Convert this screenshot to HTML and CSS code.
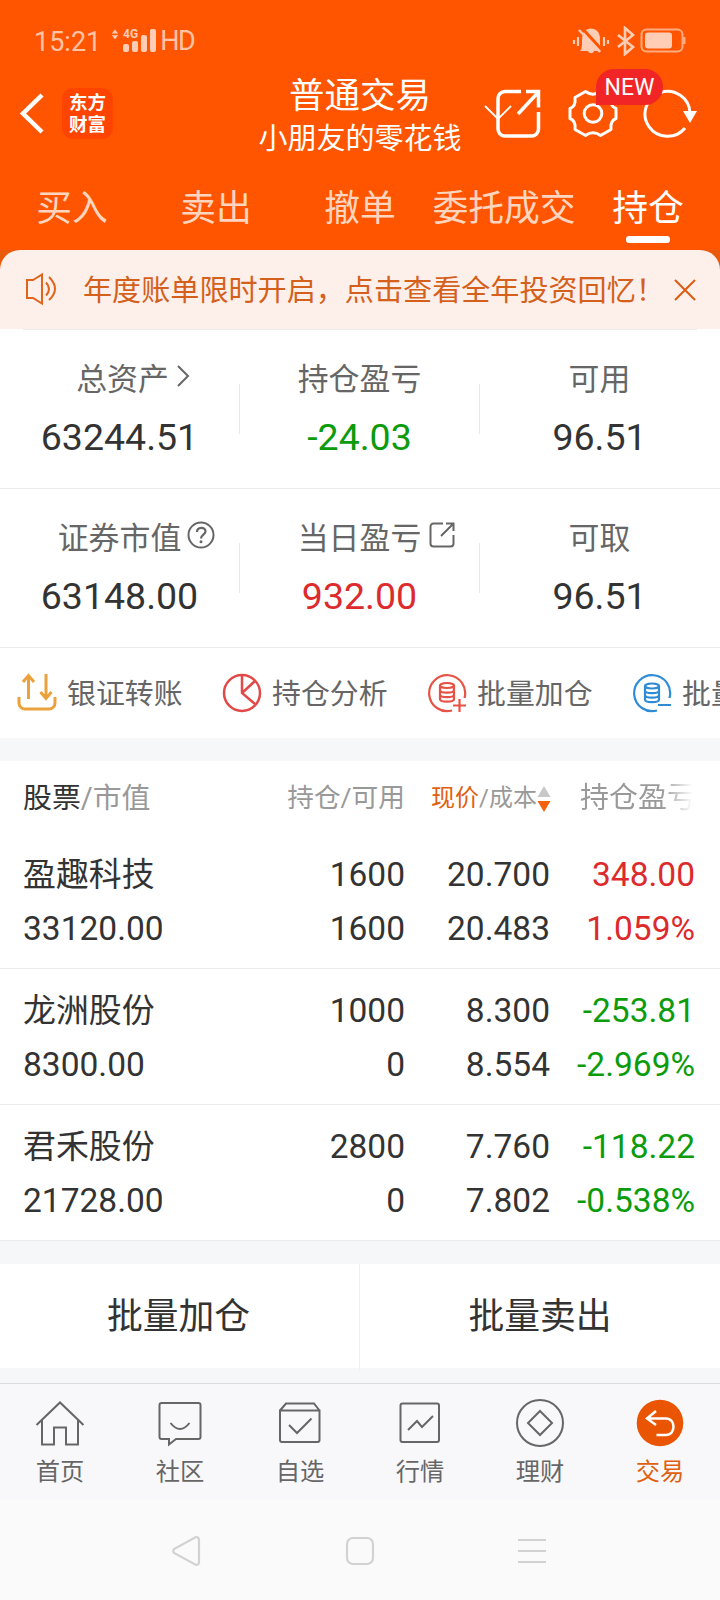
FILE: index.html
```
<!DOCTYPE html>
<html lang="zh-CN">
<head>
    <meta charset="UTF-8">
    <meta name="viewport" content="width=device-width, initial-scale=1.0">
    <title>普通交易 - 持仓</title>
    <link rel="stylesheet" href="styles.css">
</head>
<body>
    <div class="top">
        <div class="status-bar">
            <span class="time">15:21</span>
            <svg class="signal" width="46" height="26" viewBox="0 0 46 26">
                <path d="M1 7l4-5 4 5zM1 9l4 5 4-5z" transform="translate(0 1) scale(.8)"/>
                <rect x="12" y="17" width="6" height="8" rx="2"/>
                <rect x="21" y="14" width="6" height="11" rx="2"/>
                <rect x="30" y="8" width="6" height="17" rx="2"/>
                <rect x="39" y="2" width="6" height="23" rx="2"/>
                <text x="12" y="11">4G</text>
            </svg>
            <span class="hd">HD</span>
            <svg class="status-icons" width="114" height="30" viewBox="0 0 114 30">
                <path d="M8 25q2-2 2-6v-5c0-8 4-11.500 9-11.500s9 3.500 9 10.500v6q0 4 2 6h-8c-1 3-5 3-6 0z" fill="#ffcdb5"/>
                <path d="M9 1l22 24" stroke="#ff5500" stroke-width="3"/>
                <path d="M7 4l21 22" stroke="#ffcdb5" stroke-width="2.500"/>
                <path d="M2 14v4M6 11v9M32 11v9M36 14v4" stroke="#ffcdb5" stroke-width="2.200"/>
                <path d="M46 9l15 12-8 7V2l8 7-15 12" fill="none" stroke="#ffcdb5" stroke-width="2.600"/>
                <rect x="69.500" y="3.500" width="41" height="22" rx="5" fill="none" stroke="#ffab80" stroke-width="2"/>
                <rect x="73" y="6.500" width="27" height="16" rx="3" fill="#ffcdb5"/>
                <path d="M112 11v7" stroke="#ffab80" stroke-width="3"/>
            </svg>
        </div>

        <div class="header">
            <svg class="back" width="26" height="42" viewBox="0 0 26 42">
                <path d="M24 2L5 20.500 24 39" fill="none" stroke="#fff" stroke-width="4.500"/>
            </svg>
            <div class="logo">东方<br>财富</div>
            <div class="title">
                <h1>普通交易</h1>
                <p>小朋友的零花钱</p>
            </div>
            <svg class="header-icons" width="216" height="50" viewBox="0 0 216 50">
                <g fill="none" stroke="#fff" stroke-width="3.500">
                    <path d="M37 2.500H21a7 7 0 0 0-7 7V40a7 7 0 0 0 7 7h26.500a7 7 0 0 0 7-7V23M42 2.500h12.500v16M54.500 3L34 25"/>
                    <path d="M1 17l13 13 13-13" stroke-width="1.800"/>
                    <path d="M101.500 2.500Q109 8 116.500 2.500L127 8.500Q126 17.500 132 19.500V29.500Q126 31.500 127 40.500L116.500 46.500Q109 41 101.500 46.500L91 40.500Q92 31.500 86 29.500V19.500Q92 17.500 91 8.500Z" stroke-linejoin="round" stroke-width="3"/>
                    <circle cx="109" cy="24.500" r="8.800" stroke-width="3"/>
                    <path d="M206 24a22.500 22.500 0 1 0-5 15" stroke-width="3"/>
                </g>
                <path d="M199 22h14l-7 12z" fill="#fff"/>
            </svg>
            <span class="new-badge">NEW</span>
        </div>

        <div class="tabs">
            <div class="tab">买入</div>
            <div class="tab">卖出</div>
            <div class="tab">撤单</div>
            <div class="tab">委托成交</div>
            <div class="tab active-tab">持仓</div>
        </div>
    </div>

    <div class="notice-wrap">
        <div class="notice">
            <svg class="speaker" width="33" height="34" viewBox="0 0 33 34">
                <path d="M3 8h6l9-5.500v29L9 26H3zM22 10.500q6 6.500 0 13M25 5q12 12 0 23" fill="none" stroke="#e06419" stroke-width="2"/>
            </svg>
            <span class="notice-text">年度账单限时开启，点击查看全年投资回忆！</span>
            <svg class="close" width="22" height="22" viewBox="0 0 22 22">
                <path d="M1 1l20 20M21 1L1 21" stroke="#dc5a12" stroke-width="2"/>
            </svg>
        </div>
    </div>

    <div class="assets first">
        <div class="asset">
            <h3 class="total">总资产<svg class="arrow" width="14" height="22" viewBox="0 0 14 22"><path d="M2 1l10 10L2 21" fill="none" stroke="#666" stroke-width="2"/></svg></h3>
            <p>63244.51</p>
        </div>
        <div class="asset">
            <h3>持仓盈亏</h3>
            <p class="green">-24.03</p>
        </div>
        <div class="asset">
            <h3>可用</h3>
            <p>96.51</p>
        </div>
    </div>
    <div class="assets second">
        <div class="asset">
            <h3>证券市值<svg class="help" width="28" height="28" viewBox="0 0 28 28"><circle cx="14" cy="14" r="12.500" fill="none" stroke="#666" stroke-width="2"/><path d="M10 11c0-5.500 8.500-5.500 8.500-.500 0 3-4.500 3.500-4.500 7" fill="none" stroke="#666" stroke-width="2.200"/><circle cx="14" cy="20.800" r="1.500" fill="#666"/></svg></h3>
            <p>63148.00</p>
        </div>
        <div class="asset">
            <h3>当日盈亏<svg class="share" width="26" height="26" viewBox="0 0 26 26"><path d="M14 1.500H4.500a3 3 0 0 0-3 3v17a3 3 0 0 0 3 3h17a3 3 0 0 0 3-3V13M17 1.500h7.500V9M24.500 1.500L12 14" fill="none" stroke="#666" stroke-width="2"/></svg></h3>
            <p class="red">932.00</p>
        </div>
        <div class="asset">
            <h3>可取</h3>
            <p>96.51</p>
        </div>
    </div>

    <div class="actions">
        <div class="action">
            <svg width="40" height="40" viewBox="0 0 40 40">
                <path d="M2 24v6a6 6 0 0 0 6 6h24a6 6 0 0 0 6-6v-6M11.500 26V2M6 9l5.500-6.500L17 9M29 1v24M23.500 19l5.500 6.500 5.500-6.500" fill="none" stroke="#eba23c" stroke-width="3"/>
            </svg>
            <span>银证转账</span>
        </div>
        <div class="action">
            <svg width="40" height="40" viewBox="0 0 40 40">
                <path d="M20 2v18l13 11M20 20L33 8" fill="none" stroke="#e24a4a" stroke-width="2.500"/>
                <circle cx="20" cy="20" r="18" fill="none" stroke="#e24a4a" stroke-width="2.500"/>
            </svg>
            <span>持仓分析</span>
        </div>
        <div class="action">
            <svg width="40" height="40" viewBox="0 0 40 40">
                <g fill="none" stroke="#e65345" stroke-width="2.200">
                    <path d="M37.500 25A18 18 0 1 0 25 37.500M26 32.500h13M32.500 26v13"/>
                    <ellipse cx="20" cy="12.500" rx="7" ry="2.500"/>
                    <path d="M13 12.500V26c0 3.500 14 3.500 14 0V12.500M13 17c0 3.500 14 3.500 14 0M13 21.500c0 3.500 14 3.500 14 0"/>
                </g>
            </svg>
            <span>批量加仓</span>
        </div>
        <div class="action">
            <svg width="40" height="40" viewBox="0 0 40 40">
                <g fill="none" stroke="#2f8bd6" stroke-width="2.200">
                    <path d="M37.500 25A18 18 0 1 0 25 37.500M26 32h13"/>
                    <ellipse cx="20" cy="13" rx="7" ry="2.500"/>
                    <path d="M13 13v13.500c0 3.500 14 3.500 14 0V13M13 17.500c0 3.500 14 3.500 14 0M13 22c0 3.500 14 3.500 14 0"/>
                </g>
            </svg>
            <span>批量卖出</span>
        </div>
    </div>

    <div class="stocks">
        <div class="stock-head">
            <div class="name"><b>股票</b>/市值</div>
            <div class="hold">持仓/可用</div>
            <div class="price"><b>现价</b>/成本<svg width="14" height="28" viewBox="0 0 14 28"><path d="M7 1l6.500 11H.500z" fill="#c8c8c8"/><path d="M7 27l6.500-11H.500z" fill="#f5600e"/></svg></div>
            <div class="profit">持仓盈亏</div>
        </div>
        <div class="stock">
            <div><p class="cn">盈趣科技</p><p>33120.00</p></div>
            <div><p>1600</p><p>1600</p></div>
            <div><p>20.700</p><p>20.483</p></div>
            <div class="red"><p>348.00</p><p>1.059%</p></div>
        </div>
        <div class="stock">
            <div><p class="cn">龙洲股份</p><p>8300.00</p></div>
            <div><p>1000</p><p>0</p></div>
            <div><p>8.300</p><p>8.554</p></div>
            <div class="green"><p>-253.81</p><p>-2.969%</p></div>
        </div>
        <div class="stock">
            <div><p class="cn">君禾股份</p><p>21728.00</p></div>
            <div><p>2800</p><p>0</p></div>
            <div><p>7.760</p><p>7.802</p></div>
            <div class="green"><p>-118.22</p><p>-0.538%</p></div>
        </div>
    </div>

    <div class="batch">
        <div>批量加仓</div>
        <div>批量卖出</div>
    </div>

    <div class="tabbar">
        <div class="item">
            <svg width="50" height="50" viewBox="0 0 50 50"><path d="M1.500 27L25 4.500 48.500 27M7 22.500V46.500H19V29.500H31V46.500H43V22.500"/></svg>
            <span>首页</span>
        </div>
        <div class="item">
            <svg width="50" height="50" viewBox="0 0 50 50"><path d="M6.500 5h37a2 2 0 0 1 2 2v32a2 2 0 0 1-2 2H21l-7 5.500V41H6.500a2 2 0 0 1-2-2V7a2 2 0 0 1 2-2zM15.500 25q9.500 12 19 0"/></svg>
            <span>社区</span>
        </div>
        <div class="item">
            <svg width="50" height="50" viewBox="0 0 50 50"><path d="M5 12.500h39.500V42a2 2 0 0 1-2 2H7a2 2 0 0 1-2-2zL11 5.500h28l5.500 7M14 27l8 8 14.500-14.500"/></svg>
            <span>自选</span>
        </div>
        <div class="item">
            <svg width="50" height="50" viewBox="0 0 50 50"><rect x="5.500" y="5.500" width="38.500" height="38.500" rx="2"/><path d="M13 32l9-9 5 6 11-11"/></svg>
            <span>行情</span>
        </div>
        <div class="item">
            <svg width="50" height="50" viewBox="0 0 50 50"><circle cx="25" cy="25" r="23"/><path d="M25 13L37 25 25 37 13 25z"/></svg>
            <span>理财</span>
        </div>
        <div class="item current">
            <svg width="50" height="50" viewBox="0 0 50 50"><circle class="disc" cx="25" cy="25" r="23.300"/><path d="M21 13l-9 7.500 9 6.500M12 20.500h19c10 0 10 16.500 0 16.500h-9.500"/></svg>
            <span>交易</span>
        </div>
    </div>

    <div class="system-nav">
        <svg width="30" height="34" viewBox="0 0 30 34"><path d="M24 3L2 15q-1.500 2 0 4l22 12q3 0 3-3V6q0-3-3-3z"/></svg>
        <svg width="30" height="30" viewBox="0 0 30 30"><rect x="2" y="2" width="26" height="26" rx="6"/></svg>
        <svg width="30" height="28" viewBox="0 0 30 28"><path d="M1 3h28M1 14h28M1 25h28"/></svg>
    </div>
</body>
</html>
```
FILE: styles.css
```
* {
    box-sizing: border-box;
}
body {
    font-family: Roboto, 'Noto Sans CJK SC', sans-serif;
    margin: 0;
    width: 720px;
    height: 1600px;
    overflow: hidden;
    background: #f6f7f9;
    color: #333;
}
h1, h3, p {
    margin: 0;
    font-weight: 400;
}
b {
    font-weight: 400;
}
svg {
    display: block;
    flex: none;
}
.red {
    color: #dc2a2d;
}
.green {
    color: #0b9b0b;
}

/* top area */
.top {
    height: 250px;
    background: #ff5500;
    color: #fff;
}
.status-bar {
    display: flex;
    height: 72px;
    padding: 26px 34px 0 34px;
    color: #ffc4a6;
    font-size: 27px;
    line-height: 32px;
}
.signal {
    margin: 1px 0 0 10px;
    fill: #ffcdb5;
}
.signal text {
    font-size: 12px;
    font-weight: 700;
}
.hd {
    margin: -1px 0 0 3px;
    font-size: 27px;
    letter-spacing: -1.5px;
}
.status-icons {
    margin-left: auto;
}
.header {
    display: flex;
    align-items: flex-start;
    position: relative;
    height: 103px;
}
.back {
    margin: 21px 0 0 18px;
}
.logo {
    margin: 16px 0 0 18px;
    width: 51px;
    height: 51px;
    padding-top: 4px;
    border-radius: 11px;
    background: #ff4400;
    font-size: 18.5px;
    font-weight: 700;
    line-height: 22px;
    text-align: center;
}
.title {
    flex: none;
    width: 494px;
    text-align: center;
}
.title h1 {
    font-size: 35.5px;
    line-height: 48px;
}
.title p {
    font-size: 29px;
    line-height: 39px;
}
.header-icons {
    margin: 17px 0 0 -123px;
}
.new-badge {
    position: absolute;
    left: 596px;
    top: -3px;
    width: 67px;
    height: 36px;
    border-radius: 18px 18px 18px 0;
    background: #f12525;
    font-size: 23px;
    line-height: 38px;
    text-align: center;
}
.tabs {
    display: grid;
    grid-template-columns: repeat(5, 1fr);
}
.tab {
    position: relative;
    height: 75px;
    color: #ffd5bf;
    font-size: 35.8px;
    line-height: 68px;
    text-align: center;
    white-space: nowrap;
}
.active-tab {
    color: #fff;
}
.active-tab::after {
    content: '';
    position: absolute;
    left: 50px;
    bottom: 7px;
    width: 44px;
    height: 7px;
    border-radius: 3px;
    background: #fff;
}

/* notice */
.notice-wrap {
    height: 79px;
    background: linear-gradient(#e85a0a 20px, #fdf0ea 20px);
}
.notice {
    display: flex;
    align-items: center;
    height: 79px;
    padding: 0 24px 2px;
    border-radius: 20px 20px 0 0;
    background: #fdf0ea;
    color: #d4601c;
}
.notice-text {
    margin: -1px 0 0 26px;
    font-size: 29.1px;
    white-space: nowrap;
    width: 591px;
}
.close {
    margin-top: 2px;
}

/* asset numbers */
.assets {
    display: grid;
    grid-template-columns: repeat(3, 1fr);
    height: 160px;
    background: #fff;
    border-bottom: 1px solid #ececec;
}
.assets.first {
    background: linear-gradient(#ececec, #ececec) 23px 0 / 674px 1px no-repeat #fff;
}
.assets.second {
    height: 159px;
}
.asset {
    padding: 26px 1px 0 0;
    text-align: center;
    background: linear-gradient(#e8e8e8, #e8e8e8) right 55px / 1px 50px no-repeat;
}
.assets.second .asset {
    padding-top: 25px;
    background-position: right 54px;
}
.asset:last-child {
    background: none;
}
.asset h3 {
    display: flex;
    justify-content: center;
    align-items: center;
    height: 42px;
    color: #666;
    font-size: 30.9px;
}
.asset p {
    margin-top: 18px;
    font-size: 37.5px;
    line-height: 44px;
}
.asset .total {
    padding-left: 27px;
}
.arrow {
    margin-left: 7px;
}
.help {
    margin: 0 -34px 0 6px;
}
.share {
    margin: 0 -34px 0 8px;
}

/* quick actions, scrolls off to the right */
.actions {
    display: flex;
    height: 90px;
    padding-left: 17px;
    overflow: hidden;
    background: #fff;
}
.action {
    display: flex;
    flex: none;
    align-items: center;
    width: 205px;
    padding-bottom: 1px;
    color: #666;
    font-size: 28.9px;
}
.action span {
    margin: -3px 0 0 10px;
}

/* stock list */
.stocks {
    margin-top: 23px;
    background: #fff;
}
.stock-head, .stock {
    display: grid;
    grid-template-columns: 221px 161px 145px 145px;
    padding-left: 23px;
}
.stock-head {
    height: 72px;
    padding-top: 1px;
    line-height: 73px;
    color: #999;
    text-align: right;
}
.stock-head .name {
    text-align: left;
    font-size: 28.9px;
}
.stock-head .name b {
    color: #333;
}
.hold {
    font-size: 26.7px;
}
.price {
    display: flex;
    justify-content: flex-end;
    align-items: center;
    height: 73px;
    font-size: 24px;
}
.price b {
    color: #e0600f;
}
.price svg {
    margin-right: -1px;
}
.profit {
    margin-right: -1px;
    font-size: 29px;
    background: linear-gradient(90deg, #999 76%, #fff 98%);
    -webkit-background-clip: text;
    background-clip: text;
    color: transparent;
}
.stock {
    height: 136px;
    padding-top: 15px;
    border-bottom: 1px solid #ececec;
    font-size: 33.5px;
    line-height: 54px;
    text-align: right;
}
.stock div:first-child {
    text-align: left;
}
.stock p {
    height: 54px;
}
.stock .cn {
    font-size: 32.9px;
}

/* batch buttons */
.batch {
    display: grid;
    grid-template-columns: 1fr 1fr;
    height: 104px;
    margin: 23px 0 15px;
    background: #fff;
    font-size: 35.8px;
    line-height: 107px;
    text-align: center;
}
.batch div:first-child {
    padding-right: 2px;
    border-right: 1px solid #f0f0f0;
}

/* bottom navigation */
.tabbar {
    display: grid;
    grid-template-columns: repeat(6, 1fr);
    height: 117px;
    border-top: 1px solid #dcdde0;
    background: #f8f8fb;
}
.item {
    display: flex;
    flex-direction: column;
    align-items: center;
    padding-top: 14px;
    color: #666;
    font-size: 24.3px;
    line-height: 34px;
}
.item svg {
    fill: none;
    stroke: #666;
    stroke-width: 2;
    margin-bottom: 7px;
}
.current {
    color: #e0600f;
}
.item.current svg {
    stroke: #fff;
    stroke-width: 2.5;
}
.item .disc {
    fill: #ea5504;
    stroke: none;
}
.system-nav {
    display: flex;
    align-items: center;
    justify-content: space-between;
    height: 100px;
    padding: 2px 173px 0 172px;
    background: #fafafa;
}
.system-nav svg {
    fill: none;
    stroke: #d2d2d2;
    stroke-width: 2.2;
}
```
